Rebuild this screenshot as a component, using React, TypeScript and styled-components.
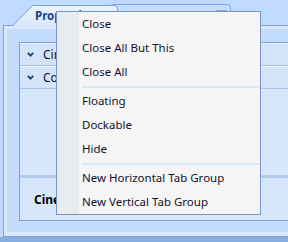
import React from "react";
import styled, { createGlobalStyle } from "styled-components";

const colors = {
  bg: "#bfdbff",
  border: "#7ea2d6",
  panelStripe: "#d9e8fb",
  panelFill: "#c3dcfc",
  rowFill: "#d3e4fa",
  rowLight: "#eef5fe",
  rowDark: "#a8c3e9",
  areaFill: "#d6e6fb",
  band: "#b3cbea",
  footer: "#88ade1",
  menuBorder: "#7a96c2",
  menuFill: "#f5f5f5",
  menuGutter: "#e9ecee",
  menuSep: "#dbe6f6",
  tabText: "#15428b",
  text: "#14122a",
  chevron: "#1c3f75",
};

const GlobalStyle = createGlobalStyle`
  html, body {
    margin: 0;
    padding: 0;
  }
  body {
    font-family: "Noto Sans", "Open Sans", sans-serif;
    background: ${colors.bg};
  }
`;

const Screen = styled.div`
  position: relative;
  width: 288px;
  height: 242px;
  overflow: hidden;
  background: ${colors.bg};
  display: flex;
  flex-direction: column;
`;

const TabStrip = styled.div`
  height: 25px;
  flex-shrink: 0;
  display: flex;
  align-items: flex-end;
  padding-left: 12px;
`;

const TabShape = styled.svg`
  position: absolute;
  inset: 0;
  overflow: visible;
`;

const ActiveTab = styled.div`
  position: relative;
  z-index: 2;
  width: 106px;
  height: 21px;
  margin-bottom: -1px;
  display: flex;
  align-items: center;
  padding-left: 23px;
  box-sizing: border-box;
`;

const TabLabel = styled.span`
  position: relative;
  font-size: 11.5px;
  font-weight: 700;
  color: ${colors.tabText};
`;

const InactiveTab = styled.div`
  position: relative;
  z-index: 1;
  width: 121px;
  height: 21px;
  margin-left: -8px;
  display: flex;
  justify-content: flex-end;
  align-items: flex-start;
  padding: 6px 4px 0 0;
  box-sizing: border-box;
`;

const TabButton = styled.span`
  position: relative;
  width: 11px;
  height: 4px;
  border-top: 2px solid #8ea8cf;
`;

const Panel = styled.div`
  flex: 1;
  width: 330px;
  margin-left: 3px;
  border: 1px solid ${colors.border};
  background: ${colors.panelStripe};
  padding: 3px 0 4px 3px;
  display: flex;
`;

const PanelBody = styled.div`
  flex: 1;
  background: ${colors.panelFill};
  padding: 13px 0 11px 12px;
  display: flex;
`;

const GroupBox = styled.div`
  flex: 1;
  border: 1px solid ${colors.border};
  background: ${colors.areaFill};
  display: flex;
  flex-direction: column;
`;

const PropRow = styled.div`
  height: 23px;
  box-sizing: border-box;
  border-top: 1px solid ${colors.rowLight};
  border-bottom: 1px solid ${colors.rowDark};
  background: ${colors.rowFill};
  display: flex;
  align-items: center;
  padding-left: 7px;
  gap: 9px;
  font-size: 12px;
  color: ${colors.text};
`;

const Area = styled.div`
  flex: 1;
`;

const Band = styled.div`
  height: 3px;
  background: ${colors.band};
`;

const CineRow = styled.div`
  height: 42px;
  display: flex;
  align-items: center;
  padding-left: 14px;
  font-size: 12px;
  font-weight: 700;
  color: #000;
`;

const Footer = styled.div`
  height: 5px;
  flex-shrink: 0;
  background: ${colors.footer};
`;

const Menu = styled.div`
  position: absolute;
  left: 56px;
  top: 11px;
  width: 205px;
  box-sizing: border-box;
  border: 1px solid ${colors.menuBorder};
  background: linear-gradient(
    to right,
    ${colors.menuGutter} 0 22px,
    ${colors.menuFill} 22px
  );
  z-index: 10;
`;

const MenuItem = styled.div`
  height: 24px;
  display: flex;
  align-items: center;
  padding-left: 25px;
  padding-bottom: 1px;
  box-sizing: border-box;
  font-size: 11.5px;
  color: ${colors.text};
  white-space: nowrap;
`;

const MenuSeparator = styled.div`
  height: 5px;
  margin-left: 25px;
  display: flex;
  align-items: center;
  &::after {
    content: "";
    flex: 1;
    height: 2px;
    background: ${colors.menuSep};
  }
`;

const Chevron = () => (
  <svg width="7" height="5" viewBox="0 0 7 5">
    <polyline
      points="0.8,0.8 3.5,3.6 6.2,0.8"
      fill="none"
      stroke={colors.chevron}
      strokeWidth="1.8"
    />
  </svg>
);

const menuGroups = [
  ["Close", "Close All But This", "Close All"],
  ["Floating", "Dockable", "Hide"],
  ["New Horizontal Tab Group", "New Vertical Tab Group"],
];

export default function App() {
  return (
    <>
      <GlobalStyle />
      <Screen>
        <TabStrip>
          <ActiveTab>
            <TabShape width="106" height="21">
              <defs>
                <linearGradient id="activeTab" x1="0" y1="0" x2="0" y2="1">
                  <stop offset="0" stopColor="#ebf3fe" />
                  <stop offset="1" stopColor={colors.panelStripe} />
                </linearGradient>
              </defs>
              <path
                d="M0.5 21 L20.5 0.5 L102 0.5 Q105.5 0.5 105.5 4 L105.5 21"
                fill="url(#activeTab)"
                stroke={colors.border}
              />
            </TabShape>
            <TabLabel>Properties</TabLabel>
          </ActiveTab>
          <InactiveTab>
            <TabShape width="121" height="21">
              <path
                d="M0.5 21 L0.5 3.5 Q0.5 0.5 3.5 0.5 L117.5 0.5 Q120.5 0.5 120.5 3.5 L120.5 21"
                fill="#c6defd"
                stroke={colors.border}
              />
            </TabShape>
            <TabButton />
          </InactiveTab>
        </TabStrip>
        <Panel>
          <PanelBody>
            <GroupBox>
              <PropRow>
                <Chevron />
                Circle
              </PropRow>
              <PropRow>
                <Chevron />
                Colors
              </PropRow>
              <Area />
              <Band />
              <CineRow>Cinema</CineRow>
            </GroupBox>
          </PanelBody>
        </Panel>
        <Footer />
        <Menu>
          {menuGroups.map((group, i) => (
            <React.Fragment key={i}>
              {i > 0 && <MenuSeparator />}
              {group.map((label) => (
                <MenuItem key={label}>{label}</MenuItem>
              ))}
            </React.Fragment>
          ))}
        </Menu>
      </Screen>
    </>
  );
}
